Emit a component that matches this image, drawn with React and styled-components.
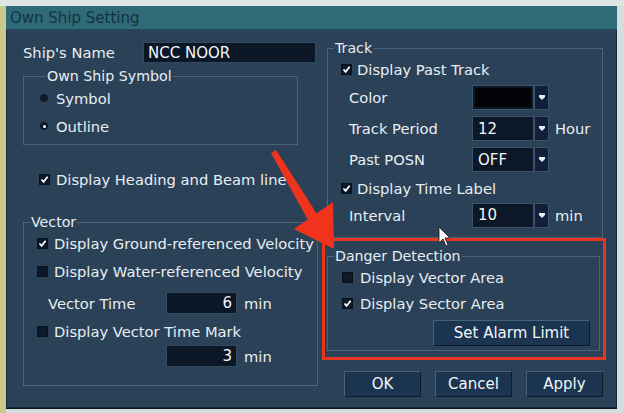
import styled, { createGlobalStyle } from "styled-components";

const GlobalStyle = createGlobalStyle`
  html, body {
    margin: 0;
    padding: 0;
  }
  body {
    width: 624px;
    height: 413px;
    overflow: hidden;
    font-family: "DejaVu Sans", Verdana, sans-serif;
    background: #d6dedc;
  }
  * {
    box-sizing: border-box;
  }
`;

const Page = styled.div`
  position: relative;
  width: 624px;
  height: 413px;
  padding: 6px 7px 5px 6px;
  background:
    linear-gradient(to bottom, #dfe5e3 0 6px, transparent 6px),
    linear-gradient(to right, #c9c88d 0 6px, #d3dde0 6px);
`;

const Dialog = styled.div`
  width: 611px;
  height: 402px;
  background: #2b4157;
  box-shadow: inset 0 0 0 1px #1a2938, 0 1px 0 #0c141c;
  display: flex;
  flex-direction: column;
  color: #e7eef3;
  font-size: 14.7px;
`;

const TitleBar = styled.div`
  height: 24px;
  background: #2e6a77;
  color: #17323f;
  font-size: 15px;
  line-height: 25px;
  padding-left: 4px;
  border-bottom: 1px solid #22495a;
`;

const Body = styled.div`
  display: grid;
  grid-template-columns: 295px 276px;
  column-gap: 9px;
  padding-left: 17px;
`;

const Column = styled.div`
  display: flex;
  flex-direction: column;
`;

const Group = styled.fieldset`
  margin: ${(p) => p.$margin || "0"};
  padding: ${(p) => p.$pad || "0"};
  width: ${(p) => p.$w}px;
  border: 1px solid #4c6479;
  min-width: 0;
`;

const Legend = styled.legend`
  padding: 0 1px;
  margin-left: 6px;
  font-size: 14.2px;
  line-height: 16px;
  color: #e7eef3;
`;

const Row = styled.div`
  display: flex;
  align-items: center;
  height: ${(p) => p.$h}px;
  padding-left: ${(p) => p.$indent || 0}px;
  margin-top: ${(p) => p.$mt || 0}px;
  gap: ${(p) => p.$gap || 0}px;
  white-space: nowrap;
`;

const Label = styled.span`
  width: ${(p) => (p.$w ? `${p.$w}px` : "auto")};
  flex-shrink: 0;
  white-space: nowrap;
`;

const Unit = styled.span`
  margin-left: ${(p) => p.$ml || 6}px;
`;

const TextBox = styled.div`
  width: ${(p) => p.$w}px;
  height: ${(p) => p.$h || 22}px;
  background: #0b1726;
  border: 1px solid #33495e;
  display: flex;
  align-items: center;
  justify-content: ${(p) => (p.$right ? "flex-end" : "flex-start")};
  padding: 0 4px;
  color: #f2f6f8;
  font-size: 15px;
`;

const Box = styled.span`
  width: 11px;
  height: 11px;
  background: #0d1929;
  border: 1px solid #08121c;
  display: inline-flex;
  align-items: center;
  justify-content: center;
  flex-shrink: 0;
`;

const Dot = styled.span`
  width: 8px;
  height: 8px;
  border-radius: 50%;
  background: #0e1a2a;
  display: inline-flex;
  align-items: center;
  justify-content: center;
  flex-shrink: 0;

  &::after {
    content: "";
    width: 3px;
    height: 3px;
    border-radius: 50%;
    background: ${(p) => (p.$on ? "#ffffff" : "transparent")};
  }
`;

const Drop = styled.div`
  width: 77px;
  height: 25px;
  display: flex;
  background: #3a5368;
  padding: 1px;
  gap: 2px;
`;

const DropField = styled.div`
  flex: 1;
  background: #0c1828;
  display: flex;
  align-items: center;
  padding: ${(p) => (p.$swatch ? "2px" : "0 0 0 5px")};
  color: #f2f6f8;
  font-size: 15px;
`;

const Swatch = styled.div`
  width: 100%;
  height: 100%;
  background: #020407;
`;

const DropButton = styled.div`
  width: 13px;
  background: #10203a;
  display: flex;
  align-items: center;
  justify-content: center;
`;

const PushButton = styled.button`
  width: ${(p) => p.$w}px;
  height: 26px;
  background: #1b3450;
  border: 1px solid;
  border-color: #47627b #0e1b29 #0e1b29 #47627b;
  color: #f2f6f8;
  font-family: inherit;
  font-size: 15px;
  padding: 0;
`;

const ButtonRow = styled.div`
  display: flex;
  gap: 14px;
  padding-left: ${(p) => p.$indent || 0}px;
  justify-content: ${(p) => p.$justify || "flex-start"};
  padding-right: ${(p) => p.$right || 0}px;
  margin-top: ${(p) => p.$mt || 0}px;
`;

const Highlight = styled.div`
  margin-left: -5px;
  width: 284px;
  border: 3px solid #e8351f;
  padding: 7px 3px 6px 2px;
`;

const Overlay = styled.svg`
  position: absolute;
  left: 0;
  top: 0;
  pointer-events: none;
`;

const Check = ({ on }) => (
  <Box>
    {on && (
      <svg width="9" height="9" viewBox="0 0 9 9">
        <path d="M1.5 4.5 L3.6 6.8 L7.6 1.8" fill="none" stroke="#fff" strokeWidth="1.8" />
      </svg>
    )}
  </Box>
);

const DropArrow = () => (
  <svg width="6" height="5" viewBox="0 0 6 5">
    <path d="M0 0 H6 V2 L3 5 L0 2 Z" fill="#e9eef2" />
  </svg>
);

const Dropdown = ({ value, swatch }) => (
  <Drop>
    <DropField $swatch={swatch}>{swatch ? <Swatch /> : value}</DropField>
    <DropButton>
      <DropArrow />
    </DropButton>
  </Drop>
);

export default function App() {
  return (
    <Page>
      <GlobalStyle />
      <Dialog>
        <TitleBar>Own Ship Setting</TitleBar>
        <Body>
          <Column>
            <Row $h={21} $mt={12}>
              <Label $w={120}>Ship's Name</Label>
              <TextBox $w={173} $h={21}>NCC NOOR</TextBox>
            </Row>

            <Group $w={275} $margin="5px 0 0 0" $pad="0 0 4px 16px">
              <Legend>Own Ship Symbol</Legend>
              <Row $h={28} $gap={8}>
                <Dot />
                <span>Symbol</span>
              </Row>
              <Row $h={28} $gap={8}>
                <Dot $on />
                <span>Outline</span>
              </Row>
            </Group>

            <Row $h={20} $mt={24} $indent={16} $gap={6}>
              <Check on />
              <span>Display Heading and Beam line</span>
            </Row>

            <Group $w={295} $margin="25px 0 0 0" $pad="0 0 15px 0">
              <Legend>Vector</Legend>
              <Row $h={26} $indent={13} $gap={6}>
                <Check on />
                <span>Display Ground-referenced Velocity</span>
              </Row>
              <Row $h={30} $indent={13} $gap={6}>
                <Check />
                <span>Display Water-referenced Velocity</span>
              </Row>
              <Row $h={34} $indent={24}>
                <Label $w={118}>Vector Time</Label>
                <TextBox $w={71} $right>6</TextBox>
                <Unit $ml={7}>min</Unit>
              </Row>
              <Row $h={22} $indent={13} $gap={6}>
                <Check />
                <span>Display Vector Time Mark</span>
              </Row>
              <Row $h={28} $indent={142}>
                <TextBox $w={71} $right>3</TextBox>
                <Unit $ml={7}>min</Unit>
              </Row>
            </Group>
          </Column>

          <Column>
            <Group $w={276} $margin="10px 0 0 0" $pad="0 0 9px 0">
              <Legend>Track</Legend>
              <Row $h={26} $indent={13} $gap={5}>
                <Check on />
                <span>Display Past Track</span>
              </Row>
              <Row $h={31} $indent={21}>
                <Label $w={123}>Color</Label>
                <Dropdown swatch />
              </Row>
              <Row $h={31} $indent={21}>
                <Label $w={123}>Track Period</Label>
                <Dropdown value="12" />
                <Unit>Hour</Unit>
              </Row>
              <Row $h={31} $indent={21}>
                <Label $w={123}>Past POSN</Label>
                <Dropdown value="OFF" />
              </Row>
              <Row $h={27} $indent={13} $gap={5}>
                <Check on />
                <span>Display Time Label</span>
              </Row>
              <Row $h={26} $indent={21}>
                <Label $w={123}>Interval</Label>
                <Dropdown value="10" />
                <Unit>min</Unit>
              </Row>
            </Group>

            <Highlight>
              <Group $w={273} $pad="0 0 4px 0">
                <Legend>Danger Detection</Legend>
                <Row $h={26} $indent={14} $gap={7}>
                  <Check />
                  <span>Display Vector Area</span>
                </Row>
                <Row $h={26} $indent={14} $gap={7}>
                  <Check on />
                  <span>Display Sector Area</span>
                </Row>
                <ButtonRow $justify="flex-end" $right={9} $mt={4}>
                  <PushButton $w={157}>Set Alarm Limit</PushButton>
                </ButtonRow>
              </Group>
            </Highlight>

            <ButtonRow $indent={17} $mt={11}>
              <PushButton $w={77}>OK</PushButton>
              <PushButton $w={77}>Cancel</PushButton>
              <PushButton $w={77}>Apply</PushButton>
            </ButtonRow>
          </Column>
        </Body>
      </Dialog>

      <Overlay width="624" height="413" viewBox="0 0 624 413">
        <path d="M271 153 L276 150 L317 214 L308 220 Z" fill="#f0331c" />
        <path d="M294 229 L333 202 L334 249 Z" fill="#f0331c" />
        <path
          d="M439 227 L439 243 L443 239 L446 246 L448 245 L445 238 L450 238 Z"
          fill="#ffffff"
          stroke="#111"
          strokeWidth="0.8"
        />
      </Overlay>
    </Page>
  );
}
